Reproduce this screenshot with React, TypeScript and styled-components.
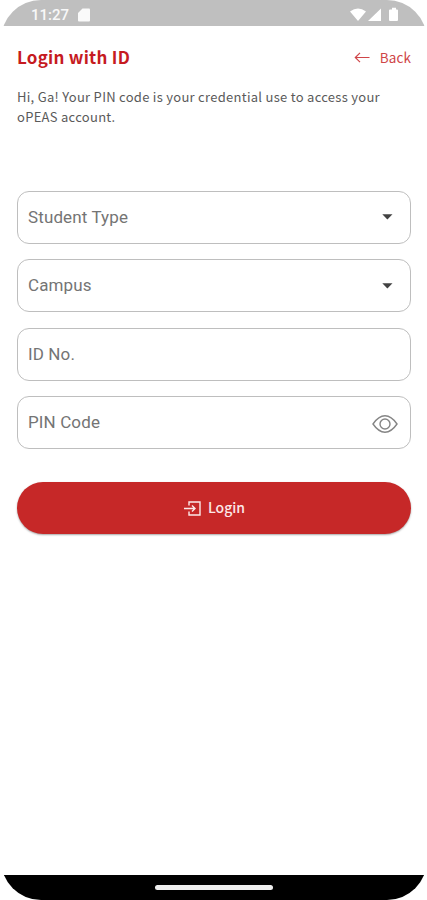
import React from 'react';
import styled, { createGlobalStyle } from 'styled-components';

const GlobalStyle = createGlobalStyle`
  * { box-sizing: border-box; }
  html, body { margin: 0; background: #fff; }
`;

const Phone = styled.div`
  display: flex;
  flex-direction: column;
  width: 426px;
  height: 900px;
  margin-left: 1px;
  background: #fff;
  border-radius: 40px;
  overflow: hidden;
  font-family: 'Noto Sans CJK JP', 'Noto Sans', sans-serif;
`;

const StatusBar = styled.div`
  display: flex;
  align-items: center;
  height: 26px;
  flex: none;
  padding: 3px 28px 0 30px;
  background: #bfbfbf;
  color: #f8f8f8;
`;

const Clock = styled.span`
  width: 47px;
  font: 500 15px/18px Roboto, sans-serif;
`;

const StatusIcons = styled.div`
  display: flex;
  margin-left: auto;
`;

const Content = styled.main`
  flex: 1;
  padding: 17px 16px 0 16px;
`;

const Header = styled.header`
  display: flex;
  align-items: center;
  justify-content: space-between;
  height: 27px;
`;

const Title = styled.h1`
  margin: 0;
  font-size: 17px;
  line-height: 25px;
  font-weight: 700;
  letter-spacing: 0.25px;
  color: #c61b1f;
`;

const Back = styled.a`
  display: flex;
  align-items: center;
  gap: 10px;
  font-size: 13.5px;
  line-height: 24px;
  letter-spacing: 0.1px;
  color: #cf4548;

  svg { margin-top: 3px; }
`;

const Intro = styled.p`
  margin: 17px 0 0;
  height: 40px;
  font-size: 13px;
  line-height: 19.5px;
  letter-spacing: 0.28px;
  color: #5a5a5a;
`;

const Form = styled.form`
  display: flex;
  flex-direction: column;
  gap: 15.6px;
  margin-top: 64px;
`;

const Field = styled.div`
  display: flex;
  align-items: center;
  justify-content: space-between;
  height: 52.8px;
  padding: 0 12px 1px 10px;
  border: 1.5px solid #bebebe;
  border-radius: 12px;
  font: 400 17px/24px Roboto, sans-serif;
  letter-spacing: 0.12px;
  color: #747474;
`;

const EyeIcon = styled.svg`
  margin-top: 3px;
`;

const LoginButton = styled.button`
  display: flex;
  align-items: center;
  justify-content: center;
  gap: 7px;
  height: 52px;
  margin-top: 17px;
  padding: 0 0 1px 1px;
  border: 0;
  border-radius: 26px;
  background: #c62828;
  box-shadow: 0 1px 2px rgba(0, 0, 0, 0.35);
  color: #fce9e9;
  font-family: inherit;
  font-size: 14px;
  line-height: 22px;
  font-weight: 500;

  svg { margin-top: 2px; }
`;

const NavBar = styled.div`
  display: flex;
  justify-content: center;
  flex: none;
  height: 25.5px;
  padding-top: 10px;
  background: #000;
`;

const HomeHandle = styled.div`
  width: 118px;
  height: 5px;
  border-radius: 3px;
  background: #eee;
`;

const Caret = styled.svg`
  margin: 1px 5px 0 0;
`;

const DropDown = () => (
  <Caret width="11" height="6" viewBox="0 0 11 6"><path d="M.3.3h10.2L5.4 5.5z" fill="#424242" /></Caret>
);

export default function App() {
  return (
    <>
      <GlobalStyle />
      <Phone>
        <StatusBar>
          <Clock>11:27</Clock>
          <svg width="12" height="14" viewBox="0 0 12 14"><path d="M4.5.5H11q1 0 1 1v11q0 1-1 1H1q-1 0-1-1V5z" fill="#fafafa" /></svg>
          <StatusIcons>
            <svg width="49" height="15" viewBox="0 0 49 15" fill="#fff">
              <path d="M0 4.500Q8-1.500 16 4.500L8 14zM31 1.500v12.500H18zM40 2.500h2V.8h4v1.700h1q1 0 1 1v9.500q0 1-1 1h-7q-1 0-1-1V3.500q0-1 1-1z" />
            </svg>
          </StatusIcons>
        </StatusBar>
        <Content>
          <Header>
            <Title>Login with ID</Title>
            <Back>
              <svg width="16" height="12" viewBox="0 0 16 12" fill="none" stroke="currentColor" strokeWidth="1.2"><path d="M15.500 5.500H1.500M6 .8 1.300 5.500 6 10.200" /></svg>
              Back
            </Back>
          </Header>
          <Intro>Hi, Ga! Your PIN code is your credential use to access your<br />oPEAS account.</Intro>
          <Form>
            <Field>Student Type<DropDown /></Field>
            <Field>Campus<DropDown /></Field>
            <Field>ID No.</Field>
            <Field>
              PIN Code
              <EyeIcon width="26" height="18" viewBox="0 0 26 18" fill="none" stroke="#858585" strokeWidth="1.4">
                <path d="M1 9C5 3.200 8.500.8 13 .8S21 3.200 25 9c-4 5.800-7.500 8.200-12 8.200S5 14.800 1 9z" />
                <circle cx="13" cy="9" r="5" />
              </EyeIcon>
            </Field>
            <LoginButton type="button">
              <svg width="17" height="15" viewBox="0 0 17 15" fill="none" stroke="currentColor" strokeWidth="1.400">
                <path d="M5 4.500V1h11v13H5v-3.500M0 7.500h11M8 4.500l3 3-3 3" />
              </svg>
              Login
            </LoginButton>
          </Form>
        </Content>
        <NavBar><HomeHandle /></NavBar>
      </Phone>
    </>
  );
}
